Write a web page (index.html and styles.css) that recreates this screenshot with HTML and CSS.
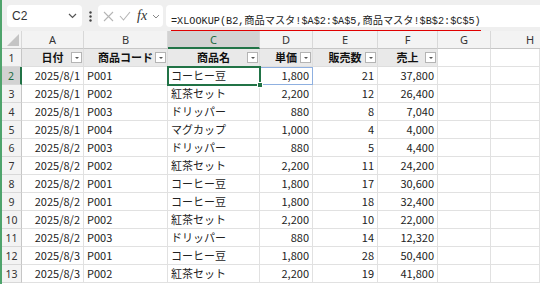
FILE: index.html
```html
<!DOCTYPE html>
<html lang="ja">

<head>
    <meta charset="UTF-8">
    <meta name="viewport" content="width=device-width, initial-scale=1.0">
    <title>売上データ</title>
    <link rel="stylesheet" href="styles.css">
</head>

<body>
    <div class="toolbar">
        <div class="namebox">
            <span>C2</span>
            <svg width="9" height="6" viewBox="0 0 9 6"><path d="M1 1l3.5 3.5L8 1" fill="none" stroke="#555" stroke-width="1.2"/></svg>
        </div>
        <div class="grip">
            <svg width="3" height="11" viewBox="0 0 3 11"><circle cx="1.5" cy="1.5" r="1.2" fill="#444"/><circle cx="1.5" cy="5.5" r="1.2" fill="#444"/><circle cx="1.5" cy="9.5" r="1.2" fill="#444"/></svg>
        </div>
        <div class="fxbox">
            <svg width="11" height="11" viewBox="0 0 11 11"><path d="M1 1l9 9M10 1l-9 9" stroke="#b5b5b5" stroke-width="1.1"/></svg>
            <svg width="12" height="10" viewBox="0 0 12 10"><path d="M1 5l3.5 4L11 1" fill="none" stroke="#b5b5b5" stroke-width="1.1"/></svg>
            <span class="fx">fx</span>
            <svg width="8" height="5" viewBox="0 0 8 5"><path d="M1 1l3 3 3-3" fill="none" stroke="#888" stroke-width="1"/></svg>
        </div>
        <div class="formula">
            <span class="ftext">=XLOOKUP(B2,商品マスタ!$A$2:$A$5,商品マスタ!$B$2:$C$5)</span>
        </div>
    </div>

    <div class="sheet">
        <!-- 列見出し -->
        <div class="ch corner"><svg width="12" height="12" viewBox="0 0 12 12"><path d="M12 0V12H0z" fill="#c4c4c4"/></svg></div>
        <div class="ch">A</div>
        <div class="ch">B</div>
        <div class="ch chsel">C</div>
        <div class="ch">D</div>
        <div class="ch">E</div>
        <div class="ch">F</div>
        <div class="ch">G</div>
        <div class="ch chlast">H</div>

        <!-- 1 -->
        <div class="rh">1</div>
        <div class="th">日付<span class="btn"></span></div>
        <div class="th">商品コード<span class="btn"></span></div>
        <div class="th">商品名<span class="btn"></span></div>
        <div class="th">単価<span class="btn"></span></div>
        <div class="th">販売数<span class="btn"></span></div>
        <div class="th">売上<span class="btn"></span></div>
        <div class="c"></div>
        <div class="c"></div>

        <!-- 2 -->
        <div class="rh rhsel">2</div>
        <div class="c r">2025/8/1</div>
        <div class="c">P001</div>
        <div class="c sel">コーヒー豆<span class="handle"></span></div>
        <div class="c r spill">1,800</div>
        <div class="c r">21</div>
        <div class="c r">37,800</div>
        <div class="c"></div>
        <div class="c"></div>

        <!-- 3 -->
        <div class="rh">3</div>
        <div class="c r">2025/8/1</div>
        <div class="c">P002</div>
        <div class="c">紅茶セット</div>
        <div class="c r">2,200</div>
        <div class="c r">12</div>
        <div class="c r">26,400</div>
        <div class="c"></div>
        <div class="c"></div>

        <!-- 4 -->
        <div class="rh">4</div>
        <div class="c r">2025/8/1</div>
        <div class="c">P003</div>
        <div class="c">ドリッパー</div>
        <div class="c r">880</div>
        <div class="c r">8</div>
        <div class="c r">7,040</div>
        <div class="c"></div>
        <div class="c"></div>

        <!-- 5 -->
        <div class="rh">5</div>
        <div class="c r">2025/8/1</div>
        <div class="c">P004</div>
        <div class="c">マグカップ</div>
        <div class="c r">1,000</div>
        <div class="c r">4</div>
        <div class="c r">4,000</div>
        <div class="c"></div>
        <div class="c"></div>

        <!-- 6 -->
        <div class="rh">6</div>
        <div class="c r">2025/8/2</div>
        <div class="c">P003</div>
        <div class="c">ドリッパー</div>
        <div class="c r">880</div>
        <div class="c r">5</div>
        <div class="c r">4,400</div>
        <div class="c"></div>
        <div class="c"></div>

        <!-- 7 -->
        <div class="rh">7</div>
        <div class="c r">2025/8/2</div>
        <div class="c">P002</div>
        <div class="c">紅茶セット</div>
        <div class="c r">2,200</div>
        <div class="c r">11</div>
        <div class="c r">24,200</div>
        <div class="c"></div>
        <div class="c"></div>

        <!-- 8 -->
        <div class="rh">8</div>
        <div class="c r">2025/8/2</div>
        <div class="c">P001</div>
        <div class="c">コーヒー豆</div>
        <div class="c r">1,800</div>
        <div class="c r">17</div>
        <div class="c r">30,600</div>
        <div class="c"></div>
        <div class="c"></div>

        <!-- 9 -->
        <div class="rh">9</div>
        <div class="c r">2025/8/2</div>
        <div class="c">P001</div>
        <div class="c">コーヒー豆</div>
        <div class="c r">1,800</div>
        <div class="c r">18</div>
        <div class="c r">32,400</div>
        <div class="c"></div>
        <div class="c"></div>

        <!-- 10 -->
        <div class="rh">10</div>
        <div class="c r">2025/8/2</div>
        <div class="c">P002</div>
        <div class="c">紅茶セット</div>
        <div class="c r">2,200</div>
        <div class="c r">10</div>
        <div class="c r">22,000</div>
        <div class="c"></div>
        <div class="c"></div>

        <!-- 11 -->
        <div class="rh">11</div>
        <div class="c r">2025/8/2</div>
        <div class="c">P003</div>
        <div class="c">ドリッパー</div>
        <div class="c r">880</div>
        <div class="c r">14</div>
        <div class="c r">12,320</div>
        <div class="c"></div>
        <div class="c"></div>

        <!-- 12 -->
        <div class="rh">12</div>
        <div class="c r">2025/8/3</div>
        <div class="c">P001</div>
        <div class="c">コーヒー豆</div>
        <div class="c r">1,800</div>
        <div class="c r">28</div>
        <div class="c r">50,400</div>
        <div class="c"></div>
        <div class="c"></div>

        <!-- 13 -->
        <div class="rh">13</div>
        <div class="c r">2025/8/3</div>
        <div class="c">P002</div>
        <div class="c">紅茶セット</div>
        <div class="c r">2,200</div>
        <div class="c r">19</div>
        <div class="c r">41,800</div>
        <div class="c"></div>
        <div class="c"></div>
    </div>
</body>

</html>
```

FILE: styles.css
```css
* {
    box-sizing: border-box;
    margin: 0;
    padding: 0;
}

body {
    width: 540px;
    height: 284px;
    overflow: hidden;
    background-color: #ffffff;
    border-left: 2px solid #4fa46c;
    font-family: "Noto Sans CJK JP", sans-serif;
    color: #222222;
}

/* barra de fórmulas */
.toolbar {
    height: 31px;
    display: flex;
    align-items: flex-start;
    padding: 5px 0 0 5px;
    background-color: #efefef;
}

.namebox {
    width: 75px;
    height: 22px;
    display: flex;
    align-items: center;
    justify-content: space-between;
    padding: 0 5px 0 5px;
    background-color: #ffffff;
    border-radius: 4px;
    font-family: "Liberation Sans", sans-serif;
    font-size: 12px;
    color: #333333;
}

.grip {
    width: 16px;
    height: 22px;
    display: flex;
    align-items: center;
    justify-content: center;
}

.fxbox {
    width: 65px;
    height: 22px;
    display: flex;
    align-items: center;
    gap: 5px;
    padding-left: 5px;
    background-color: #ffffff;
    border-radius: 4px;
}

.fx {
    font-family: "Liberation Serif", serif;
    font-style: italic;
    font-size: 14px;
    color: #333333;
    margin-left: 1px;
}

.formula {
    flex: 1;
    height: 22px;
    margin-left: 3px;
    padding-left: 5px;
    background-color: #ffffff;
    border-radius: 4px 0 0 4px;
}

.ftext {
    display: inline-block;
    font-family: "Liberation Mono", "Noto Sans CJK JP", monospace;
    font-size: 10.2px;
    line-height: 16px;
    padding-top: 1px;
    color: #222222;
    border-bottom: 2px solid #e00000;
}

/* hoja */
.sheet {
    display: grid;
    grid-template-columns: 20px 62px 84px 92px 53px 65px 60px 53px 1fr;
    grid-auto-rows: 18px;
    font-size: 11px;
}

.ch {
    display: flex;
    align-items: center;
    justify-content: center;
    background-color: #f3f3f3;
    border-right: 1px solid #d8d8d8;
    border-bottom: 1px solid #c6c6c6;
    font-family: "Noto Sans", sans-serif;
    font-size: 11px;
    color: #333333;
}

.chlast {
    justify-content: flex-start;
    padding-left: 35px;
    border-right: none;
}

.corner {
    align-items: flex-end;
    justify-content: flex-end;
    padding: 0 2px 2px 0;
}

.chsel {
    background-color: #d2d2d2;
    border-bottom: 2px solid #217346;
    color: #1d6b40;
}

.rh {
    display: flex;
    align-items: center;
    justify-content: center;
    background-color: #f3f3f3;
    border-right: 1px solid #c6c6c6;
    border-bottom: 1px solid #d8d8d8;
    font-family: "Noto Sans", sans-serif;
    font-size: 10.5px;
    color: #333333;
}

.rhsel {
    background-color: #d2d2d2;
    border-right: 2px solid #217346;
    color: #1d6b40;
}

.c,
.th {
    position: relative;
    padding: 0 3px;
    line-height: 17px;
    white-space: nowrap;
    overflow: hidden;
    border-right: 1px solid #e1e1e1;
    border-bottom: 1px solid #e1e1e1;
}

.r {
    text-align: right;
}

.th {
    text-align: center;
    font-weight: bold;
    color: #111111;
    background-color: #e9e9e9;
    border-color: #dedede;
}

.btn {
    position: absolute;
    right: 1px;
    top: 3px;
    width: 11px;
    height: 11px;
    background-color: #ffffff;
    border: 1px solid #b4b4b4;
}

.btn::after {
    content: "";
    position: absolute;
    left: 3px;
    top: 4px;
    border-left: 2px solid transparent;
    border-right: 2px solid transparent;
    border-top: 2px solid #555555;
}

.sel {
    overflow: visible;
    outline: 2px solid #217346;
    outline-offset: -1px;
    z-index: 2;
}

.handle {
    position: absolute;
    right: -4px;
    bottom: -4px;
    width: 6px;
    height: 6px;
    background-color: #217346;
    border: 1px solid #ffffff;
}

.spill {
    outline: 1px solid #8fb0e0;
    outline-offset: -1px;
}
```
